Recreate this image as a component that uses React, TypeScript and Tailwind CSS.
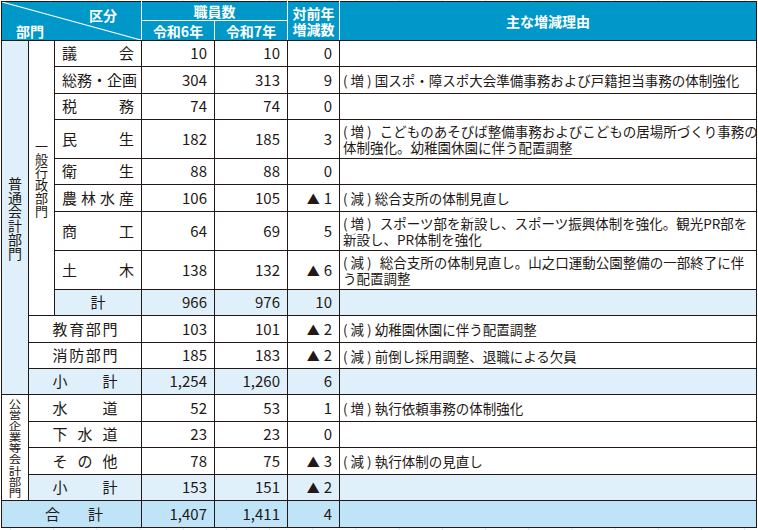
import React from 'react'

// 職員数の部門別増減表
const line = 'border border-[#231815]'
const head = 'border border-white bg-[#0097c9] text-white font-bold text-[14px] leading-[16px] text-center'
const num = `${line} text-right pr-[7px] text-[15px]`
const reason = `${line} pl-[3px] text-[13.5px] leading-[16px] text-left`

function Spread({ text, className }: { text: string; className: string }) {
  return (
    <div className={`flex justify-between text-[15px] ${className}`}>
      {text.split('').map((c, i) => (
        <span key={i}>{c}</span>
      ))}
    </div>
  )
}

// 縦書きラベル: 1文字ずつ積む
function Vertical({ text, step, size }: { text: string; step: string; size: string }) {
  return (
    <div className={`flex flex-col items-center ${size}`}>
      {text.split('').map((c, i) => (
        <span key={i} className={`block ${step}`}>
          {c}
        </span>
      ))}
    </div>
  )
}

function Tag({ kind }: { kind: string }) {
  return (
    <span className="inline-block mr-[3px]">
      (<span className="mx-[3px]">{kind}</span>)
    </span>
  )
}

function Delta({ v }: { v: string }) {
  if (v.startsWith('-')) {
    return (
      <span>
        <span className="text-[13px] mr-[4px]">▲</span>
        {v.slice(1)}
      </span>
    )
  }
  return <span>{v}</span>
}

function Reason({ kind, lines, gap }: { kind?: string; lines?: string[]; gap?: boolean }) {
  if (!kind || !lines) return null
  return (
    <div className="whitespace-nowrap">
      <div>
        <Tag kind={kind} />
        {gap && <span className="inline-block w-[5px]" />}
        {lines[0]}
      </div>
      {lines.slice(1).map((l, i) => (
        <div key={i}>{l}</div>
      ))}
    </div>
  )
}

export default function App() {
  return (
    <div className="w-[758px] h-[530px] bg-white bg-[linear-gradient(to_right,#d7e8f5_1px,transparent_1px)] bg-[length:43.2px_100%] bg-[position:10px_0] pt-[1px] pl-[1px] font-['Noto_Sans_CJK_JP','Noto_Sans',sans-serif] text-[#231815]">
      <table className="table-fixed border-collapse w-[755px] bg-white border border-[#231815]">
        <colgroup>
          <col className="w-[27px]" />
          <col className="w-[26px]" />
          <col className="w-[87px]" />
          <col className="w-[73px]" />
          <col className="w-[73px]" />
          <col className="w-[52px]" />
          <col className="w-[417px]" />
        </colgroup>
        <thead>
          <tr className="h-[19px]">
            <th colSpan={3} rowSpan={2} className={`${head} relative p-0 border-t-[#231815] border-l-[#231815] border-b-[#231815]`}>
              <svg className="absolute inset-0 w-full h-full" viewBox="0 0 140 39" preserveAspectRatio="none">
                <line x1="0" y1="0" x2="140" y2="39" stroke="white" strokeWidth="1.2" />
              </svg>
              <span className="absolute left-[87px] top-[5px]">区分</span>
              <span className="absolute left-[14px] top-[21px]">部門</span>
            </th>
            <th colSpan={2} className={`${head} border-t-[#231815]`}>職員数</th>
            <th rowSpan={2} className={`${head} border-t-[#231815] border-b-[#231815]`}>
              対前年
              <br />
              増減数
            </th>
            <th rowSpan={2} className={`${head} border-t-[#231815] border-b-[#231815] border-r-[#231815]`}>主な増減理由</th>
          </tr>
          <tr className="h-[20px]">
            <th className={`${head} border-b-[#231815]`}>令和6年</th>
            <th className={`${head} border-b-[#231815]`}>令和7年</th>
          </tr>
        </thead>
        <tbody>
          <tr className="h-[26px]">
            <td rowSpan={12} className={`${line} bg-[#dff0fa] p-0 align-middle`}>
              <Vertical text="普通会計部門" step="h-[14px] leading-[14px]" size="text-[14px]" />
            </td>
            <td rowSpan={9} className={`${line} p-0 align-middle`}>
              <Vertical text="一般行政部門" step="h-[13px] leading-[13px]" size="text-[13px]" />
            </td>
            <td className={line}><Spread text="議会" className="px-[7px]" /></td>
            <td className={num}>10</td>
            <td className={num}>10</td>
            <td className={num}>0</td>
            <td className={reason} />
          </tr>
          <tr className="h-[27px]">
            <td className={line}><Spread text="総務・企画" className="px-[7px]" /></td>
            <td className={num}>304</td>
            <td className={num}>313</td>
            <td className={num}>9</td>
            <td className={reason}>
              <Reason kind="増" lines={['国スポ・障スポ大会準備事務および戸籍担当事務の体制強化']} />
            </td>
          </tr>
          <tr className="h-[26px]">
            <td className={line}><Spread text="税務" className="px-[7px]" /></td>
            <td className={num}>74</td>
            <td className={num}>74</td>
            <td className={num}>0</td>
            <td className={reason} />
          </tr>
          <tr className="h-[39px]">
            <td className={line}><Spread text="民生" className="px-[7px]" /></td>
            <td className={num}>182</td>
            <td className={num}>185</td>
            <td className={num}>3</td>
            <td className={reason}>
              <Reason gap kind="増" lines={['こどものあそびば整備事務およびこどもの居場所づくり事務の', '体制強化。幼稚園休園に伴う配置調整']} />
            </td>
          </tr>
          <tr className="h-[26px]">
            <td className={line}><Spread text="衛生" className="px-[7px]" /></td>
            <td className={num}>88</td>
            <td className={num}>88</td>
            <td className={num}>0</td>
            <td className={reason} />
          </tr>
          <tr className="h-[27px]">
            <td className={line}><Spread text="農林水産" className="px-[7px]" /></td>
            <td className={num}>106</td>
            <td className={num}>105</td>
            <td className={num}><Delta v="-1" /></td>
            <td className={reason}>
              <Reason kind="減" lines={['総合支所の体制見直し']} />
            </td>
          </tr>
          <tr className="h-[39px]">
            <td className={line}><Spread text="商工" className="px-[7px]" /></td>
            <td className={num}>64</td>
            <td className={num}>69</td>
            <td className={num}>5</td>
            <td className={reason}>
              <Reason gap kind="増" lines={['スポーツ部を新設し、スポーツ振興体制を強化。観光PR部を', '新設し、PR体制を強化']} />
            </td>
          </tr>
          <tr className="h-[39px]">
            <td className={line}><Spread text="土木" className="px-[7px]" /></td>
            <td className={num}>138</td>
            <td className={num}>132</td>
            <td className={num}><Delta v="-6" /></td>
            <td className={reason}>
              <Reason gap kind="減" lines={['総合支所の体制見直し。山之口運動公園整備の一部終了に伴', 'う配置調整']} />
            </td>
          </tr>
          <tr className="h-[26px] bg-[#dff0fa]">
            <td className={`${line} text-center text-[15px]`}>計</td>
            <td className={num}>966</td>
            <td className={num}>976</td>
            <td className={num}>10</td>
            <td className={reason} />
          </tr>
          <tr className="h-[27px]">
            <td colSpan={2} className={line}><Spread text="教育部門" className="mx-auto w-[65px]" /></td>
            <td className={num}>103</td>
            <td className={num}>101</td>
            <td className={num}><Delta v="-2" /></td>
            <td className={reason}>
              <Reason kind="減" lines={['幼稚園休園に伴う配置調整']} />
            </td>
          </tr>
          <tr className="h-[26px]">
            <td colSpan={2} className={line}><Spread text="消防部門" className="mx-auto w-[65px]" /></td>
            <td className={num}>185</td>
            <td className={num}>183</td>
            <td className={num}><Delta v="-2" /></td>
            <td className={reason}>
              <Reason kind="減" lines={['前倒し採用調整、退職による欠員']} />
            </td>
          </tr>
          <tr className="h-[26px] bg-[#dff0fa]">
            <td colSpan={2} className={line}><Spread text="小計" className="mx-auto w-[65px]" /></td>
            <td className={num}>1,254</td>
            <td className={num}>1,260</td>
            <td className={num}>6</td>
            <td className={reason} />
          </tr>
          <tr className="h-[27px]">
            <td rowSpan={4} className={`${line} p-0 align-middle`}>
              <div className="-my-[8px] scale-y-[0.86]">
                <Vertical text="公営企業等会計部門" step="h-[13px] leading-[13px]" size="text-[12.5px]" />
              </div>
            </td>
            <td colSpan={2} className={line}><Spread text="水道" className="mx-auto w-[65px]" /></td>
            <td className={num}>52</td>
            <td className={num}>53</td>
            <td className={num}>1</td>
            <td className={reason}>
              <Reason kind="増" lines={['執行依頼事務の体制強化']} />
            </td>
          </tr>
          <tr className="h-[26px]">
            <td colSpan={2} className={line}><Spread text="下水道" className="mx-auto w-[65px]" /></td>
            <td className={num}>23</td>
            <td className={num}>23</td>
            <td className={num}>0</td>
            <td className={reason} />
          </tr>
          <tr className="h-[27px]">
            <td colSpan={2} className={line}><Spread text="その他" className="mx-auto w-[65px]" /></td>
            <td className={num}>78</td>
            <td className={num}>75</td>
            <td className={num}><Delta v="-3" /></td>
            <td className={reason}>
              <Reason kind="減" lines={['執行体制の見直し']} />
            </td>
          </tr>
          <tr className="h-[26px] bg-[#dff0fa]">
            <td colSpan={2} className={line}><Spread text="小計" className="mx-auto w-[65px]" /></td>
            <td className={num}>153</td>
            <td className={num}>151</td>
            <td className={num}><Delta v="-2" /></td>
            <td className={reason} />
          </tr>
          <tr className="h-[27px] bg-[#bfe4f7]">
            <td colSpan={3} className={line}><Spread text="合計" className="ml-[43px] w-[58px]" /></td>
            <td className={num}>1,407</td>
            <td className={num}>1,411</td>
            <td className={num}>4</td>
            <td className={reason} />
          </tr>
        </tbody>
      </table>
    </div>
  )
}
